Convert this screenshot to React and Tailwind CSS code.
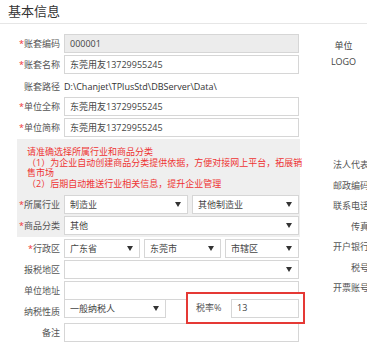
import React from 'react';

const font = "font-['Open_Sans','Noto_Sans_CJK_SC',sans-serif]";

function Arrow() {
	return (
		<svg width="6" height="5" viewBox="0 0 6 5" className="shrink-0">
			<path d="M0 0 L6 0 L3 5 Z" fill="#333" />
		</svg>
	);
}

function Label({ text, req, width = 'w-[60px]' }) {
	return (
		<div className={`${width} shrink-0 text-right text-[#555] whitespace-nowrap`}>
			{req && <span className="text-[#e33]">*</span>}
			{text}
		</div>
	);
}

function Box({ children, className = '', gray }) {
	return (
		<div
			className={`h-[19px] shrink-0 border border-[#d6d6d6] flex items-center px-[5px] text-[#444] ${
				gray ? 'bg-[#ececec]' : 'bg-white'
			} ${className}`}
		>
			{children}
		</div>
	);
}

function Select({ value, className = '' }) {
	return (
		<Box className={`justify-between pr-[6px] ${className}`}>
			<span>{value}</span>
			<Arrow />
		</Box>
	);
}

function Row({ label, req, children, width, className = 'mt-[2px]' }) {
	return (
		<div className={`flex items-center h-[19px] ${className}`}>
			<Label text={label} req={req} width={width} />
			<div className="ml-[4px] w-[235px] flex gap-[4px]">{children}</div>
		</div>
	);
}

const rightLabels = ['法人代表', '邮政编码', '联系电话', '传真', '开户银行', '税号', '开票账号'];

export default function App() {
	return (
		<div className={`w-[367px] h-[354px] overflow-hidden bg-white text-[9px] leading-[12px] ${font}`}>
			<div className="h-[24px] border-b border-[#e6e6e6] pl-[8px] pt-[4px] text-[13px] leading-[15px] text-[#333]">
				基本信息
			</div>
			<div className="flex">
				{/* left form */}
				<div className="w-[300px] shrink-0 pt-[10px]">
					<Row label="账套编码" req className="">
						<Box gray className="w-full">000001</Box>
					</Row>
					<Row label="账套名称" req>
						<Box className="w-full">东莞用友13729955245</Box>
					</Row>
					<Row label="账套路径" className="mt-[3px]">
						<span className="text-[#333] whitespace-nowrap">D:\Chanjet\TPlusStd\DBServer\Data\</span>
					</Row>
					<Row label="单位全称" req className="mt-[1px]">
						<Box className="w-full">东莞用友13729955245</Box>
					</Row>
					<Row label="单位简称" req>
						<Box className="w-full">东莞用友13729955245</Box>
					</Row>

					<div className="ml-[17px] w-[283px] mt-[2px] bg-[#efefef] pt-[8px] pb-[2px]">
						<div className="pl-[10px] text-[#ee3333] leading-[10.5px] whitespace-nowrap">
							<div>请准确选择所属行业和商品分类</div>
							<div>（1）为企业自动创建商品分类提供依据，方便对接网上平台，拓展销</div>
							<div>售市场</div>
							<div>（2）后期自动推送行业相关信息，提升企业管理</div>
						</div>
						<Row label="所属行业" req width="w-[43px]" className="mt-[6px]">
							<Select value="制造业" className="w-[124px]" />
							<Select value="其他制造业" className="w-[107px]" />
						</Row>
						<Row label="商品分类" req width="w-[43px]">
							<Select value="其他" className="w-full" />
						</Row>
					</div>

					<Row label="行政区" req>
						<Select value="广东省" className="w-[76px]" />
						<Select value="东莞市" className="w-[77px]" />
						<Select value="市辖区" className="w-[74px]" />
					</Row>
					<Row label="报税地区">
						<Select value="" className="w-full" />
					</Row>
					<Row label="单位地址">
						<Box className="w-full" />
					</Row>
					<Row label="纳税性质">
						<Select value="一般纳税人" className="w-[102px]" />
						<div className="ml-[16px] self-start -mt-[7px] h-[32px] w-[119px] border-2 border-[#e53935] flex items-center pl-[8px] pr-[4px] shrink-0 relative z-10 bg-white">
							<span className="text-[#555] whitespace-nowrap">税率%</span>
							<Box className="ml-auto w-[68px]">13</Box>
						</div>
					</Row>
					<Row label="备注">
						<Box className="w-full" />
					</Row>
				</div>

				{/* right column */}
				<div className="flex-1 flex flex-col items-end text-[#555] whitespace-nowrap">
					<div className="self-center ml-[20px] mt-[14px] flex flex-col items-center leading-[16px] text-[#444]">
						<span>单位</span>
						<span>LOGO</span>
					</div>
					<div className="mt-[85px] mr-[-2px] flex flex-col items-end">
						{rightLabels.map((l) => (
							<div key={l} className="h-[20.5px] flex items-center">
								{l}
							</div>
						))}
					</div>
				</div>
			</div>
		</div>
	);
}
